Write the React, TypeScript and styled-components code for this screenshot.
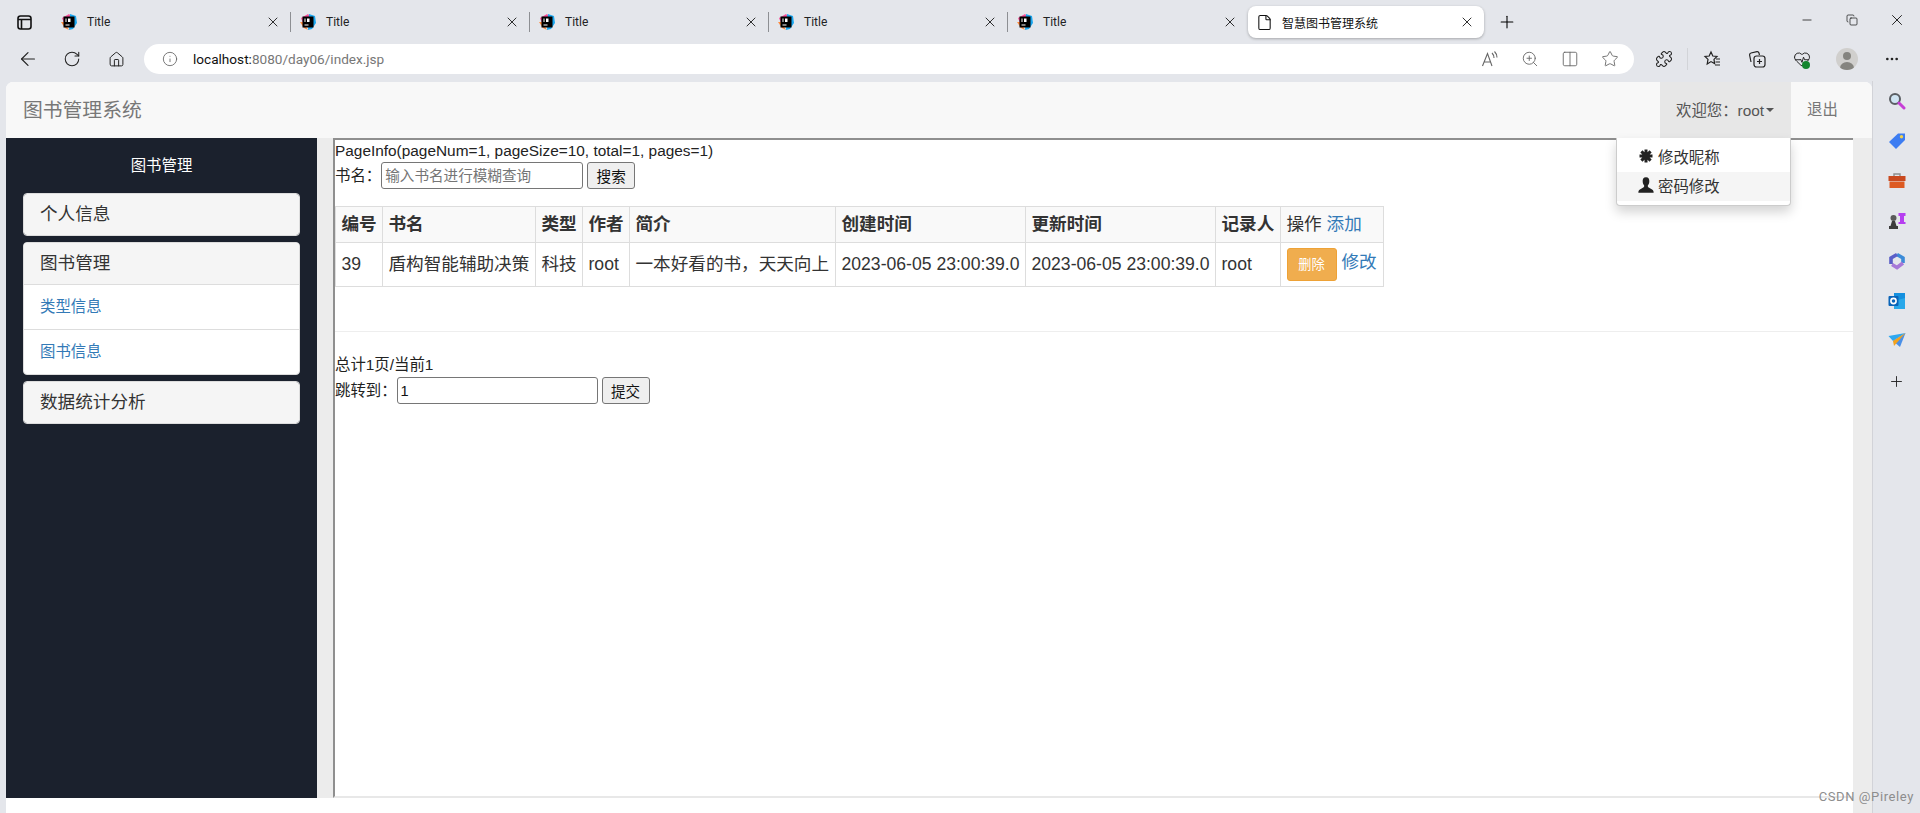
import React from 'react';
import styled, { createGlobalStyle } from 'styled-components';
import {
  ArrowLeft,
  Columns2,
  Copy,
  File,
  HeartPulse,
  Home,
  Info,
  Minus,
  MoreHorizontal,
  Plus,
  Puzzle,
  RotateCw,
  Star,
  X,
  ZoomIn,
} from 'lucide-react';

const webFont = `"Liberation Sans", "Noto Sans CJK SC", sans-serif`;
const chromeFont = `Roboto, "Noto Sans CJK SC", sans-serif`;

const GlobalStyle = createGlobalStyle`
  html, body {
    margin: 0;
    padding: 0;
    height: 100%;
    overflow: hidden;
    background: #e4e6eb;
  }
  #root {
    height: 100%;
  }
  * {
    box-sizing: border-box;
  }
`;

const Shell = styled.div`
  position: relative;
  display: flex;
  flex-direction: column;
  width: 1920px;
  height: 813px;
  background: #e4e6eb;
  font-family: ${webFont};
`;

/* browser tab strip */
const TabStrip = styled.div`
  display: flex;
  align-items: flex-start;
  height: 44px;
  padding-top: 6px;
`;

const TabToggle = styled.div`
  width: 52px;
  height: 32px;
  padding-left: 17px;
  display: flex;
  align-items: center;
`;

const Tab = styled.div`
  display: flex;
  align-items: center;
  width: 239px;
  height: 32px;
  padding-left: 9px;
  font-family: ${chromeFont};
  font-size: 12px;
  color: #222;
`;

const TabTitle = styled.span`
  flex: 1;
  margin-left: 10px;
`;

const TabClose = styled.span`
  display: flex;
  margin-right: 9px;
  color: #111;
`;

const TabDivider = styled.span`
  width: 1px;
  height: 20px;
  background: #8d8f93;
`;

const ActiveTab = styled.div`
  display: flex;
  align-items: center;
  width: 236px;
  height: 32px;
  margin-left: 1px;
  padding-left: 8px;
  background: #fff;
  border-radius: 8px;
  box-shadow: 0 1px 3px rgba(0, 0, 0, 0.28);
  font-family: ${chromeFont};
  font-size: 12px;
  color: #111;
`;

const ActiveTitle = styled.span`
  flex: 1;
  margin-left: 9px;
`;

const NewTab = styled.div`
  display: flex;
  justify-content: center;
  align-items: center;
  width: 46px;
  height: 32px;
`;

const WindowControls = styled.div`
  display: flex;
  margin-left: auto;
  height: 28px;
  margin-right: 1px;
`;

const WindowButton = styled.div`
  display: flex;
  justify-content: center;
  align-items: center;
  width: 45px;
  color: #111;
`;

/* address bar row */
const Toolbar = styled.div`
  display: flex;
  align-items: flex-start;
  height: 38px;
`;

const NavButtons = styled.div`
  display: flex;
  width: 144px;
  padding-left: 6px;
`;

const NavButton = styled.div`
  display: flex;
  justify-content: center;
  align-items: center;
  width: 44px;
  height: 30px;
  color: #222;
`;

const AddressBar = styled.div`
  display: flex;
  align-items: center;
  width: 1490px;
  height: 30px;
  padding-left: 18px;
  padding-right: 15px;
  background: #fff;
  border-radius: 15px;
  color: #666;
`;

const Url = styled.div`
  flex: 1;
  margin-left: 15px;
  font-family: ${chromeFont};
  font-size: 13.6px;
  color: #777;
`;

const Host = styled.span`
  color: #111;
`;

const BarIcons = styled.div`
  display: flex;
  gap: 22px;
  color: #666;
`;

const ExtensionIcons = styled.div`
  display: flex;
  align-items: center;
  flex: 1;
  padding-left: 7px;
  color: #222;
`;

const ExtensionSlot = styled.div`
  position: relative;
  display: flex;
  justify-content: center;
  align-items: center;
  width: 45px;
  height: 30px;
`;

const ToolbarDivider = styled.span`
  width: 1px;
  height: 22px;
  margin: 0 1px 0 1px;
  background: #d2d4d8;
`;

const HealthDot = styled.span`
  position: absolute;
  right: 14px;
  bottom: 5px;
  width: 8px;
  height: 8px;
  border-radius: 50%;
  background: #14852f;
`;

const Avatar = styled.div`
  position: relative;
  width: 22px;
  height: 22px;
  border-radius: 50%;
  background: #d0cfcd;
  overflow: hidden;
`;

const AvatarHead = styled.span`
  position: absolute;
  left: 7px;
  top: 4px;
  width: 8px;
  height: 8px;
  border-radius: 50%;
  background: #85847f;
`;

const AvatarBody = styled.span`
  position: absolute;
  left: 4px;
  top: 14px;
  width: 14px;
  height: 12px;
  border-radius: 50%;
  background: #85847f;
`;

/* page area under the browser bars */
const Workspace = styled.div`
  display: flex;
  flex: 1;
  min-height: 0;
  padding-left: 6px;
`;

const Page = styled.div`
  display: flex;
  flex-direction: column;
  width: 1866px;
  background: #fff;
  border-radius: 7px 7px 0 0;
  overflow: hidden;
`;

const Navbar = styled.div`
  display: flex;
  align-items: stretch;
  height: 56px;
  background: #f8f8f8;
`;

const Brand = styled.div`
  flex: 1;
  padding-left: 17px;
  line-height: 56px;
  font-size: 19.8px;
  color: #777;
`;

const NavActive = styled.div`
  display: flex;
  align-items: center;
  width: 131px;
  padding-left: 16px;
  padding-bottom: 2px;
  background: #e7e7e7;
  font-size: 15.4px;
  color: #555;
`;

const Caret = styled.span`
  width: 0;
  height: 0;
  margin-left: 2px;
  margin-top: 2px;
  border-top: 4px solid #555;
  border-left: 4px solid transparent;
  border-right: 4px solid transparent;
`;

const NavLink = styled.div`
  width: 81px;
  padding-left: 16px;
  line-height: 56px;
  font-size: 15.4px;
  color: #777;
`;

const PageBody = styled.div`
  display: flex;
  flex: 1;
  min-height: 0;
`;

const MainColumn = styled.div`
  display: flex;
  flex-direction: column;
  flex: 1;
  min-width: 0;
`;

const ContentRow = styled.div`
  display: flex;
  flex: 1;
  min-height: 0;
  background: #ececec;
`;

const PageFoot = styled.div`
  height: 15px;
  background: #fff;
`;

const ScrollGutter = styled.div`
  width: 19px;
  background: #ececec;
`;

const Sidebar = styled.aside`
  width: 311px;
  padding: 0 17px;
  background: #1b212d;
`;

const SidebarTitle = styled.div`
  height: 55px;
  line-height: 56px;
  text-align: center;
  font-size: 15.4px;
  color: #fff;
`;

const Panel = styled.div`
  margin-bottom: 6px;
  background: #fff;
  border: 1px solid #ddd;
  border-radius: 4px;
  overflow: hidden;
`;

const PanelHeading = styled.div`
  height: 41px;
  padding-left: 16px;
  line-height: 40px;
  background: #f5f5f5;
  font-size: 17.6px;
  color: #333;
`;

const PanelLink = styled.div`
  height: 45px;
  padding-left: 16px;
  line-height: 44px;
  border-top: 1px solid #ddd;
  font-size: 15.4px;
  color: #337ab7;
`;

const Frame = styled.main`
  flex: 1;
  min-width: 0;
  margin-left: 16px;
  background: #fff;
  border-top: 2px solid #8f8f8f;
  border-left: 2px solid #8f8f8f;
  border-bottom: 2px solid #e8e8e8;
  font-size: 15.4px;
  line-height: 22px;
  color: #222;
`;

const FormRow = styled.div`
  display: flex;
  align-items: center;
  height: 27px;
`;

const TextInput = styled.input<{ $width: number }>`
  width: ${(p) => p.$width}px;
  height: 27px;
  padding: 1px 3px;
  border: 1px solid #767676;
  border-radius: 3px;
  background: #fff;
  font-family: ${webFont};
  font-size: 14.6px;
  color: #111;

  &::placeholder {
    color: #757575;
  }
`;

const PlainButton = styled.button`
  width: 48px;
  height: 27px;
  margin-left: 4px;
  padding: 0;
  border: 1px solid #767676;
  border-radius: 3px;
  background: #efefef;
  font-family: ${webFont};
  font-size: 14.6px;
  color: #111;
`;

const BookTable = styled.table`
  margin-top: 17px;
  border-collapse: collapse;
  table-layout: fixed;
  width: 1048px;
  font-size: 17.6px;
  line-height: 25px;
  color: #333;
`;

const HeadCell = styled.th<{ $width: number }>`
  width: ${(p) => p.$width}px;
  height: 36px;
  padding: 0 5px 0 5.5px;
  text-align: left;
  white-space: nowrap;
  background: #f9f9f9;
  border: 1px solid #ddd;
  font-weight: 700;
`;

const PlainHeadCell = styled(HeadCell)`
  font-weight: 400;
`;

const Cell = styled.td`
  height: 44px;
  padding: 0 5px 0 5.5px;
  white-space: nowrap;
  border: 1px solid #ddd;
`;

const ActionWrap = styled.div`
  display: flex;
  align-items: flex-start;
  gap: 5px;
`;

const TableLink = styled.a`
  color: #337ab7;
`;

const EditLink = styled(TableLink)`
  margin-top: 2px;
`;

const DeleteButton = styled.span`
  display: block;
  width: 50px;
  height: 33px;
  line-height: 31px;
  text-align: center;
  background: #f0ad4e;
  border: 1px solid #eea236;
  border-radius: 3px;
  font-size: 13.2px;
  color: #fff;
`;

const Rule = styled.hr`
  margin: 44px 0 0;
  border: 0;
  border-top: 1px solid #eee;
`;

const Totals = styled.div`
  margin-top: 22px;
`;

const JumpRow = styled(FormRow)`
  margin-top: 1px;
`;

/* user menu over the page */
const Dropdown = styled.div`
  position: absolute;
  left: 1616px;
  top: 138px;
  width: 175px;
  height: 68px;
  padding-top: 5px;
  background: #fff;
  border: 1px solid #ccc;
  border-top: 0;
  border-radius: 0 0 4px 4px;
  box-shadow: 0 6px 12px rgba(0, 0, 0, 0.175);
  font-size: 15.4px;
  color: #333;
`;

const MenuItem = styled.div<{ $hover?: boolean }>`
  display: flex;
  align-items: center;
  gap: 4px;
  height: 29px;
  padding-left: 21px;
  padding-bottom: 3px;
  background: ${(p) => (p.$hover ? '#f5f5f5' : 'transparent')};
`;

const GlyphSlot = styled.span`
  display: flex;
  justify-content: center;
  width: 16px;
  color: #222;
`;

/* edge sidebar */
const Rail = styled.div`
  display: flex;
  flex-direction: column;
  align-items: center;
  flex: 1;
  margin-top: -1px;
  border-left: 1px solid #d2d3d8;
`;

const RailSlot = styled.div`
  display: flex;
  justify-content: center;
  align-items: center;
  height: 40px;
  color: #222;
`;

const Watermark = styled.div`
  position: absolute;
  right: 6px;
  bottom: 9px;
  font-family: ${chromeFont};
  font-size: 13px;
  letter-spacing: 0.6px;
  color: #8d8d8d;
`;

const IdeaIcon = () => (
  <svg width="16" height="16" viewBox="0 0 16 16">
    <path d="M1 4 L8 0 L11 3 L3 9 Z" fill="#fc4f9a" />
    <path d="M0 8 L4 14 L8 16 L3 8 Z" fill="#ff8a3d" />
    <path d="M9 0 L15 2 L16 9 L12 15 L8 16 Z" fill="#1aa7f0" />
    <rect x="2.5" y="2.5" width="11" height="11" fill="#000" />
    <rect x="4.5" y="4.5" width="1" height="3.5" fill="#fff" />
    <rect x="7" y="4.5" width="2.5" height="3.5" fill="#fff" />
    <rect x="4.5" y="10.5" width="4" height="1" fill="#fff" />
  </svg>
);

const PanelToggle = () => (
  <svg width="15" height="15" viewBox="0 0 15 15" fill="none" stroke="#111" strokeWidth="1.6">
    <rect x="1" y="1" width="13" height="13" rx="2.5" />
    <path d="M1 4.5 H14 M4.5 4.5 V14" />
  </svg>
);

const ReadAloud = () => (
  <svg width="18" height="18" viewBox="0 0 18 18" fill="none" stroke="#666" strokeWidth="1.1">
    <path d="M1.5 16 L6.5 3.5 L11 16 M3 12 H10" />
    <path d="M11 3 Q13 5 13 8 M13.5 1.5 Q16 4 16 7.5" />
  </svg>
);

const FavoritesIcon = () => (
  <svg width="18" height="18" viewBox="0 0 18 18" fill="none" stroke="#222" strokeWidth="1.2">
    <path d="M8 2 L9.8 6 L14 6.5 L11 9.4 L11.6 13.6 L8 11.6 L4.2 14 L5 9.4 L2 6.5 L6.2 6 Z" />
    <path d="M13 9 H17 M12.5 12 H17 M12 15 H17" />
  </svg>
);

const CollectionsIcon = () => (
  <svg width="18" height="18" viewBox="0 0 18 18" fill="none" stroke="#222" strokeWidth="1.2">
    <path d="M3 12 L1.6 5 Q1.4 3.4 3 3 L9 1.6 Q10.4 1.4 11 3 L11.4 5" />
    <rect x="6" y="6" width="11" height="11" rx="2.5" />
    <path d="M11.5 9 V14 M9 11.5 H14" />
  </svg>
);

const SearchTool = () => (
  <svg width="18" height="18" viewBox="0 0 18 18">
    <circle cx="7" cy="7" r="5" fill="#cfe4f2" stroke="#5a5e63" strokeWidth="2" />
    <path d="M11 11 L16 16" stroke="#c63ed6" strokeWidth="3" strokeLinecap="round" />
  </svg>
);

const TagTool = () => (
  <svg width="18" height="18" viewBox="0 0 18 18">
    <path d="M1 10 L10 1.5 H17 V8 L8 17 Z" fill="#3d7df2" />
    <circle cx="13.5" cy="4.8" r="1.7" fill="#f4d24a" />
  </svg>
);

const CaseTool = () => (
  <svg width="18" height="18" viewBox="0 0 18 18">
    <path d="M6 4 V2 H12 V4" fill="none" stroke="#8d8d8d" strokeWidth="1.4" />
    <rect x="0.5" y="4" width="17" height="5" fill="#c9491f" />
    <rect x="1.5" y="9.5" width="15" height="6.5" fill="#dd5a22" />
  </svg>
);

const ChessTool = () => (
  <svg width="18" height="18" viewBox="0 0 18 18">
    <path d="M10.5 1 H17.5 V4 H16 V10 H17.5 V12 H10.5 V10 H12 V4 H10.5 Z" fill="#b63ff0" />
    <circle cx="5.5" cy="6" r="3" fill="#5a5a5a" />
    <path d="M4 9 H7 L8.5 14 H10 V17 H1 V14 H2.5 Z" fill="#3c3c3c" />
  </svg>
);

const CopilotTool = () => (
  <svg width="18" height="18" viewBox="0 0 18 18" fill="none" strokeWidth="3.6">
    <path d="M9 2.5 L15 6 V11" stroke="#3b8bd8" />
    <path d="M15 11 L9 15.5 L4 12.5" stroke="#a678d8" />
    <path d="M3 12 V6 L9 2.5" stroke="#5a5fc8" />
  </svg>
);

const OutlookTool = () => (
  <svg width="18" height="18" viewBox="0 0 18 18">
    <rect x="6" y="1" width="11" height="15" fill="#1490df" />
    <path d="M6 9 L17 6 V17 H6 Z" fill="#28a8ea" />
    <rect x="0.5" y="4" width="10" height="10" rx="1" fill="#0a64b8" />
    <circle cx="5.5" cy="9" r="2.6" fill="none" stroke="#fff" strokeWidth="1.6" />
  </svg>
);

const SendTool = () => (
  <svg width="18" height="18" viewBox="0 0 18 18">
    <path d="M0.5 4 L17.5 1 L5 9 Z" fill="#2ea8f0" />
    <path d="M5 9 L17.5 1 L12 15 Z" fill="#4a90e8" />
    <path d="M5 9 L17.5 1 L6 14 Z" fill="#f2a21e" />
  </svg>
);

const AsteriskGlyph = () => (
  <svg width="14" height="14" viewBox="0 0 14 14" stroke="#222" strokeWidth="3">
    <path d="M7 0.5 V13.5 M0.5 7 H13.5 M2.4 2.4 L11.6 11.6 M11.6 2.4 L2.4 11.6" />
  </svg>
);

const UserGlyph = () => (
  <svg width="16" height="16" viewBox="0 0 15 15" fill="#222">
    <path d="M7.5 0.2 C5 0.2 4.2 2.2 4.4 4.4 C4.5 6 5.1 7.2 5.8 8 C6 9.4 5.2 10 3.4 10.8 C1.6 11.6 0.3 12.2 0.3 14.8 H14.7 C14.7 12.2 13.4 11.6 11.6 10.8 C9.8 10 9 9.4 9.2 8 C9.9 7.2 10.5 6 10.6 4.4 C10.8 2.2 10 0.2 7.5 0.2 Z" />
  </svg>
);

const tabs = [1, 2, 3, 4, 5];

const columns = [
  { title: '编号', width: 47 },
  { title: '书名', width: 153 },
  { title: '类型', width: 47 },
  { title: '作者', width: 47 },
  { title: '简介', width: 206 },
  { title: '创建时间', width: 190 },
  { title: '更新时间', width: 190 },
  { title: '记录人', width: 65 },
];

const book = ['39', '盾构智能辅助决策', '科技', 'root', '一本好看的书，天天向上', '2023-06-05 23:00:39.0', '2023-06-05 23:00:39.0', 'root'];

const App: React.FC = () => {
  return (
    <Shell>
      <GlobalStyle />
      <TabStrip>
        <TabToggle>
          <PanelToggle />
        </TabToggle>
        {tabs.map((id) => (
          <Tab key={id}>
            <IdeaIcon />
            <TabTitle>Title</TabTitle>
            <TabClose>
              <X size={16} strokeWidth={1.3} />
            </TabClose>
            {id < 5 ? <TabDivider /> : null}
          </Tab>
        ))}
        <ActiveTab>
          <File size={17} strokeWidth={1.5} />
          <ActiveTitle>智慧图书管理系统</ActiveTitle>
          <TabClose>
            <X size={16} strokeWidth={1.3} />
          </TabClose>
        </ActiveTab>
        <NewTab>
          <Plus size={20} strokeWidth={1.3} />
        </NewTab>
        <WindowControls>
          <WindowButton>
            <Minus size={14} strokeWidth={1.3} />
          </WindowButton>
          <WindowButton>
            <Copy size={12} strokeWidth={1.4} />
          </WindowButton>
          <WindowButton>
            <X size={18} strokeWidth={1.2} />
          </WindowButton>
        </WindowControls>
      </TabStrip>

      <Toolbar>
        <NavButtons>
          <NavButton>
            <ArrowLeft size={22} strokeWidth={1.3} />
          </NavButton>
          <NavButton>
            <RotateCw size={18} strokeWidth={1.4} />
          </NavButton>
          <NavButton>
            <Home size={17} strokeWidth={1.4} />
          </NavButton>
        </NavButtons>
        <AddressBar>
          <Info size={16} strokeWidth={1.3} />
          <Url>
            <Host>localhost:</Host>8080/day06/index.jsp
          </Url>
          <BarIcons>
            <ReadAloud />
            <ZoomIn size={18} strokeWidth={1.2} />
            <Columns2 size={18} strokeWidth={1.2} />
            <Star size={18} strokeWidth={1.2} />
          </BarIcons>
        </AddressBar>
        <ExtensionIcons>
          <ExtensionSlot>
            <Puzzle size={18} strokeWidth={1.4} />
          </ExtensionSlot>
          <ToolbarDivider />
          <ExtensionSlot>
            <FavoritesIcon />
          </ExtensionSlot>
          <ExtensionSlot>
            <CollectionsIcon />
          </ExtensionSlot>
          <ExtensionSlot>
            <HeartPulse size={18} strokeWidth={1.3} />
            <HealthDot />
          </ExtensionSlot>
          <ExtensionSlot>
            <Avatar>
              <AvatarHead />
              <AvatarBody />
            </Avatar>
          </ExtensionSlot>
          <ExtensionSlot>
            <MoreHorizontal size={16} />
          </ExtensionSlot>
        </ExtensionIcons>
      </Toolbar>

      <Workspace>
        <Page>
          <Navbar>
            <Brand>图书管理系统</Brand>
            <NavActive>
              欢迎您：root
              <Caret />
            </NavActive>
            <NavLink>退出</NavLink>
          </Navbar>
          <PageBody>
            <MainColumn>
              <ContentRow>
                <Sidebar>
                  <SidebarTitle>图书管理</SidebarTitle>
                  <Panel>
                    <PanelHeading>个人信息</PanelHeading>
                  </Panel>
                  <Panel>
                    <PanelHeading>图书管理</PanelHeading>
                    <PanelLink>类型信息</PanelLink>
                    <PanelLink>图书信息</PanelLink>
                  </Panel>
                  <Panel>
                    <PanelHeading>数据统计分析</PanelHeading>
                  </Panel>
                </Sidebar>
                <Frame>
                  <div>PageInfo(pageNum=1, pageSize=10, total=1, pages=1)</div>
                  <FormRow>
                    书名：
                    <TextInput $width={202} placeholder="输入书名进行模糊查询" />
                    <PlainButton>搜索</PlainButton>
                  </FormRow>
                  <BookTable>
                    <thead>
                      <tr>
                        {columns.map((col) => (
                          <HeadCell key={col.title} $width={col.width}>
                            {col.title}
                          </HeadCell>
                        ))}
                        <PlainHeadCell $width={103}>
                          操作 <TableLink>添加</TableLink>
                        </PlainHeadCell>
                      </tr>
                    </thead>
                    <tbody>
                      <tr>
                        {book.map((value, i) => (
                          <Cell key={i}>{value}</Cell>
                        ))}
                        <Cell>
                          <ActionWrap>
                            <DeleteButton>删除</DeleteButton>
                            <EditLink>修改</EditLink>
                          </ActionWrap>
                        </Cell>
                      </tr>
                    </tbody>
                  </BookTable>
                  <Rule />
                  <Totals>总计1页/当前1</Totals>
                  <JumpRow>
                    跳转到：
                    <TextInput $width={201} defaultValue="1" />
                    <PlainButton>提交</PlainButton>
                  </JumpRow>
                </Frame>
              </ContentRow>
              <PageFoot />
            </MainColumn>
            <ScrollGutter />
          </PageBody>
        </Page>
        <Rail>
          <RailSlot>
            <SearchTool />
          </RailSlot>
          <RailSlot>
            <TagTool />
          </RailSlot>
          <RailSlot>
            <CaseTool />
          </RailSlot>
          <RailSlot>
            <ChessTool />
          </RailSlot>
          <RailSlot>
            <CopilotTool />
          </RailSlot>
          <RailSlot>
            <OutlookTool />
          </RailSlot>
          <RailSlot>
            <SendTool />
          </RailSlot>
          <RailSlot>
            <Plus size={17} strokeWidth={1.3} />
          </RailSlot>
        </Rail>
      </Workspace>

      <Dropdown>
        <MenuItem>
          <GlyphSlot>
            <AsteriskGlyph />
          </GlyphSlot>
          修改昵称
        </MenuItem>
        <MenuItem $hover>
          <GlyphSlot>
            <UserGlyph />
          </GlyphSlot>
          密码修改
        </MenuItem>
      </Dropdown>
      <Watermark>CSDN @Pireley</Watermark>
    </Shell>
  );
};

export default App;
